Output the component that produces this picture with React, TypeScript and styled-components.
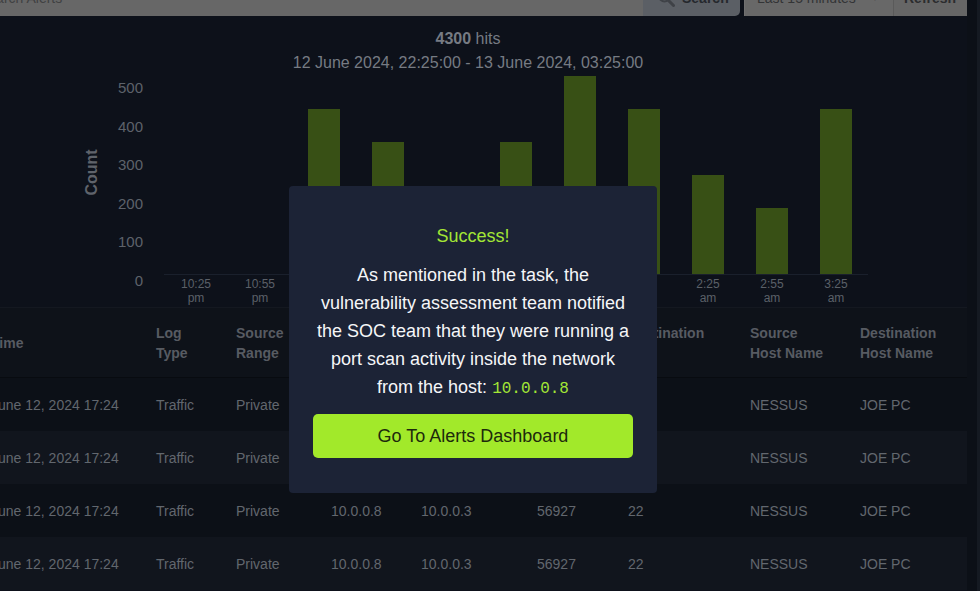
import React from "react";
import styled, { createGlobalStyle } from "styled-components";

const GlobalStyle = createGlobalStyle`
  html, body { margin: 0; padding: 0; background: #0d111a; overflow: hidden; }
  body { font-family: "Liberation Sans", Arial, sans-serif; }
  * { box-sizing: border-box; }
`;

const Page = styled.div`
  display: grid;
  grid-template-columns: 998px 10px 3px;
  margin-left: -31px;
  height: 591px;
  overflow: hidden;
`;

const Main = styled.main`
  display: flex;
  flex-direction: column;
  min-width: 0;
`;

const Gutter = styled.div<{ $tone: string }>`
  background: ${(p) => p.$tone};
`;

const TopBar = styled.div`
  display: flex;
  height: 36px;
  margin-top: -20px;
  font-size: 14px;
`;

const SearchInput = styled.div`
  flex: 1;
  display: flex;
  align-items: center;
  background: #676767;
  color: #404142;
  padding-left: 10px;
`;

const SearchButton = styled.div`
  width: 97px;
  display: flex;
  align-items: center;
  gap: 7px;
  padding-left: 14px;
  background: #5b5f65;
  color: #25282d;
  font-weight: 700;
  border-bottom-right-radius: 5px;
`;

const Spacer = styled.div`
  width: 4px;
`;

const Dropdown = styled.div`
  width: 150px;
  display: flex;
  align-items: center;
  justify-content: space-between;
  padding: 0 14px 0 12px;
  background: #686868;
  color: #333436;
  border-left: 1px solid #707070;
  border-right: 1px solid #5a5a5a;
`;

const Chevron = styled.span`
  font-size: 8px;
  color: #4a4a4a;
`;

const RefreshButton = styled.div`
  width: 73px;
  display: flex;
  align-items: center;
  padding-left: 10px;
  background: #666666;
  color: #2b2c2e;
  font-weight: 700;
`;

const ChartSection = styled.section`
  display: flex;
  flex-direction: column;
  align-items: center;
  padding-top: 11px;
`;

const ChartTitle = styled.div`
  font-size: 16px;
  line-height: 24px;
  color: #767b83;
  text-align: center;
  b { font-weight: 700; }
`;

const ChartSvg = styled.svg`
  display: block;
  font-family: "Liberation Sans", Arial, sans-serif;
`;

const Table = styled.div`
  display: flex;
  flex-direction: column;
  border-top: 1px solid #141820;
`;

const Row = styled.div<{ $variant: "head" | "odd" | "even" }>`
  display: grid;
  grid-template-columns: 165px 80px 95px 90px 116px 91px 122px 110px 1fr;
  align-items: center;
  padding-left: 22px;
  height: ${(p) => (p.$variant === "head" ? "70px" : "53px")};
  background: ${(p) =>
    p.$variant === "head" ? "#0e1219" : p.$variant === "odd" ? "#0c1017" : "#11151d"};
  border-bottom: ${(p) => (p.$variant === "head" ? "1px solid #080b10" : "none")};
`;

const HeadCell = styled.div`
  font-size: 14px;
  font-weight: 700;
  line-height: 20px;
  color: #575b62;
  white-space: pre-line;
`;

const Cell = styled.div`
  font-size: 14px;
  color: #62676e;
  white-space: nowrap;
`;

const Backdrop = styled.div`
  position: fixed;
  inset: 0;
`;

const Modal = styled.div`
  position: absolute;
  left: 289px;
  top: 186px;
  width: 368px;
  height: 307px;
  background: #1c2336;
  border-radius: 4px;
  padding: 36px 24px 0;
  display: flex;
  flex-direction: column;
  align-items: stretch;
  text-align: center;
`;

const SuccessTitle = styled.div`
  font-size: 18px;
  line-height: 28px;
  color: #a3e635;
`;

const Message = styled.p`
  margin: 11px 0 0;
  font-size: 18px;
  line-height: 28px;
  color: #f5f6f8;
`;

const Mono = styled.code`
  font-family: "Liberation Mono", "DejaVu Sans Mono", monospace;
  font-size: 16px;
  color: #a3e635;
`;

const PrimaryButton = styled.button`
  margin-top: 11px;
  height: 44px;
  border: none;
  border-radius: 5px;
  background: #a2e92a;
  color: #1d2a0c;
  font-family: "Liberation Sans", Arial, sans-serif;
  font-size: 18px;
  cursor: pointer;
`;

const headers = [
  "Time",
  "Log\nType",
  "Source\nRange",
  "Source\nIP",
  "Destination\nIP",
  "Source\nPort",
  "Destination\nPort",
  "Source\nHost Name",
  "Destination\nHost Name",
];

const rows = Array.from({ length: 4 }, () => [
  "June 12, 2024 17:24",
  "Traffic",
  "Private",
  "10.0.0.8",
  "10.0.0.3",
  "56927",
  "22",
  "NESSUS",
  "JOE PC",
]);

const slots = [
  { t: "10:25", p: "pm", top: 274 },
  { t: "10:55", p: "pm", top: 274 },
  { t: "11:25", p: "pm", top: 109 },
  { t: "11:55", p: "pm", top: 142 },
  { t: "12:25", p: "am", top: 200 },
  { t: "12:55", p: "am", top: 142 },
  { t: "1:25", p: "am", top: 76 },
  { t: "1:55", p: "am", top: 109 },
  { t: "2:25", p: "am", top: 175 },
  { t: "2:55", p: "am", top: 208 },
  { t: "3:25", p: "am", top: 109 },
];

const ticks = [
  { v: "500", y: 93 },
  { v: "400", y: 132 },
  { v: "300", y: 170 },
  { v: "200", y: 209 },
  { v: "100", y: 247 },
  { v: "0", y: 286 },
];

function Chart() {
  return (
    <ChartSvg width={998} height={232} viewBox="-31 75 998 232">
      <text
        transform="translate(97,172.5) rotate(-90)"
        textAnchor="middle"
        fontSize="16"
        fontWeight="700"
        fill="#5f636b"
      >
        Count
      </text>
      {ticks.map((t) => (
        <text key={t.v} x={143} y={t.y} textAnchor="end" fontSize="15" fill="#5d626a">
          {t.v}
        </text>
      ))}
      <line x1={164} x2={868} y1={274.5} y2={274.5} stroke="#1a202c" strokeWidth={1} />
      {slots.map((s, i) => {
        const cx = 196 + 64 * i;
        return (
          <g key={s.t}>
            {s.top < 274 && (
              <rect x={cx - 16} y={s.top} width={32} height={274 - s.top} fill="#385015" />
            )}
            <text x={cx} y={288} textAnchor="middle" fontSize="12" fill="#5b6068">
              {s.t}
            </text>
            <text x={cx} y={302} textAnchor="middle" fontSize="12" fill="#5b6068">
              {s.p}
            </text>
          </g>
        );
      })}
    </ChartSvg>
  );
}

function SearchIcon() {
  return (
    <svg width="18" height="18" viewBox="0 0 18 18" fill="none">
      <circle cx="7.5" cy="7.5" r="5" stroke="#3f4247" strokeWidth="2.2" />
      <path d="M11.5 11.5l5 5" stroke="#3f4247" strokeWidth="3" strokeLinecap="round" />
    </svg>
  );
}

export default function App() {
  return (
    <>
      <GlobalStyle />
      <Page>
        <Main>
          <TopBar>
            <SearchInput>Search Alerts</SearchInput>
            <SearchButton>
              <SearchIcon />
              Search
            </SearchButton>
            <Spacer />
            <Dropdown>
              Last 15 minutes
              <Chevron>▼</Chevron>
            </Dropdown>
            <RefreshButton>Refresh</RefreshButton>
          </TopBar>
          <ChartSection>
            <ChartTitle>
              <b>4300</b> hits
              <br />
              12 June 2024, 22:25:00 - 13 June 2024, 03:25:00
            </ChartTitle>
            <Chart />
          </ChartSection>
          <Table>
            <Row $variant="head">
              {headers.map((h) => (
                <HeadCell key={h}>{h}</HeadCell>
              ))}
            </Row>
            {rows.map((r, i) => (
              <Row key={i} $variant={i % 2 === 0 ? "odd" : "even"}>
                {r.map((c, j) => (
                  <Cell key={j}>{c}</Cell>
                ))}
              </Row>
            ))}
          </Table>
        </Main>
        <Gutter $tone="#0c1017" />
        <Gutter $tone="#151a22" />
      </Page>
      <Backdrop>
        <Modal>
          <SuccessTitle>Success!</SuccessTitle>
          <Message>
            As mentioned in the task, the vulnerability assessment team notified the SOC team
            that they were running a port scan activity inside the network from the host:{" "}
            <Mono>10.0.0.8</Mono>
          </Message>
          <PrimaryButton>Go To Alerts Dashboard</PrimaryButton>
        </Modal>
      </Backdrop>
    </>
  );
}
